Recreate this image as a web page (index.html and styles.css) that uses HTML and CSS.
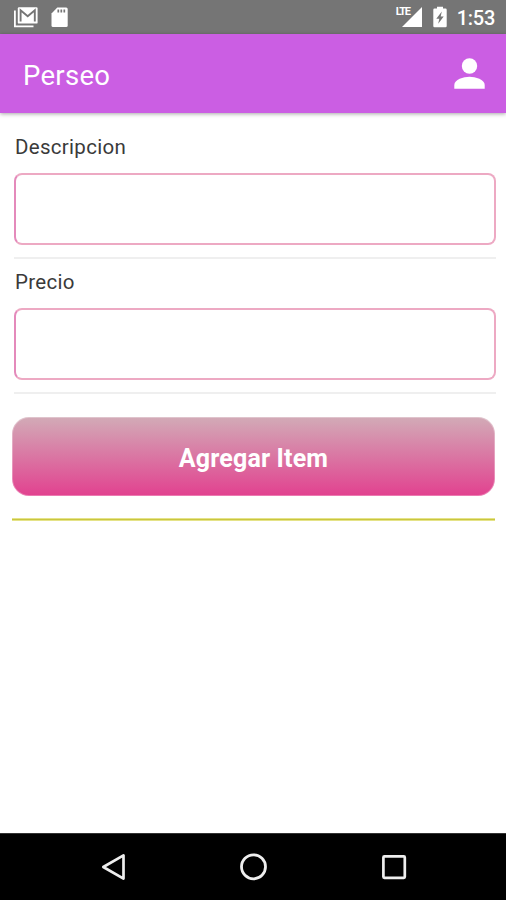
FILE: index.html
```html
<!DOCTYPE html>
<html lang="es">
<head>
    <meta charset="UTF-8">
    <meta name="viewport" content="width=device-width, initial-scale=1.0">
    <title>Perseo</title>
    <link rel="stylesheet" href="styles.css">
</head>
<body>
    <div class="status-bar">
        <svg class="icon-mail" width="25" height="22" viewBox="0 0 25 22">
            <path d="M1.9 4.5V20.4H20.5" fill="none" stroke="#fff" stroke-width="1.8"/>
            <rect x="4.8" y="1.2" width="19.8" height="16.4" rx="1.2" fill="#fff"/>
            <path d="M7.6 15.6V4.2L14.7 10.2L21.8 4.2V15.6" fill="none" stroke="#757575" stroke-width="1.9"/>
        </svg>
        <svg class="icon-sd" width="18" height="22" viewBox="0 0 18 22">
            <path d="M6.3 1.5H15.2Q16.7 1.5 16.7 3V19.5Q16.7 21 15.2 21H2Q.5 21 .5 19.5V7.5Z" fill="#fff"/>
            <path d="M7.3 3.5V6.5M10.3 3.5V6.5M13.3 3.5V6.5" stroke="#757575" stroke-width="1.7"/>
        </svg>
        <div class="signal">
            <span class="lte">LTE</span>
            <svg width="20" height="20" viewBox="0 0 20 20">
                <path d="M20 0V20H0Z" fill="#fff"/>
            </svg>
        </div>
        <svg class="icon-battery" width="14" height="22" viewBox="0 0 14 22">
            <path d="M4 .8H10V2.5H12.5Q13.7 2.5 13.7 3.7V20Q13.7 21.2 12.5 21.2H1.5Q.3 21.2 .3 20V3.7Q.3 2.5 1.5 2.5H4Z" fill="#fff"/>
            <path d="M8.8 5.5L3.3 12.7H6.3L5.2 17.8L10.7 10.5H7.7Z" fill="#757575"/>
        </svg>
        <span class="clock">1:53</span>
    </div>

    <header class="app-bar">
        <h1>Perseo</h1>
        <svg width="31" height="31" viewBox="0 0 31 31">
            <circle cx="15.5" cy="8" r="7.7" fill="#fff"/>
            <path d="M.3 30.7V27C.3 21.5 9.5 18.7 15.5 18.7S30.7 21.5 30.7 27V30.7Z" fill="#fff"/>
        </svg>
    </header>

    <main class="content">
        <form>
            <div class="field">
                <label for="descripcion">Descripcion</label>
                <input type="text" id="descripcion">
            </div>
            <div class="field">
                <label for="precio">Precio</label>
                <input type="text" id="precio">
            </div>
            <button type="button" class="add-button">Agregar Item</button>
        </form>
        <div class="list-line"></div>
    </main>

    <nav class="nav-bar">
        <svg width="28" height="30" viewBox="0 0 28 30">
            <path d="M23.5 3.4V26.6L3.3 15Z" fill="none" stroke="#eee" stroke-width="2.7" stroke-linejoin="round"/>
        </svg>
        <svg width="28" height="30" viewBox="0 0 28 30">
            <circle cx="13.5" cy="14.8" r="12" fill="none" stroke="#eee" stroke-width="2.8"/>
        </svg>
        <svg width="28" height="30" viewBox="0 0 28 30">
            <rect x="3.4" y="4.4" width="21.4" height="21.4" rx="1" fill="none" stroke="#eee" stroke-width="2.7"/>
        </svg>
    </nav>
</body>
</html>
```

FILE: styles.css
```css
* {
    box-sizing: border-box;
}

body {
    margin: 0;
    height: 900px;
    display: flex;
    flex-direction: column;
    background-color: #fff;
    font-family: Roboto, "Liberation Sans", sans-serif;
    overflow: hidden;
}

svg {
    display: block;
    flex: none;
}

/* Android status bar */
.status-bar {
    flex: none;
    display: flex;
    align-items: center;
    height: 34px;
    padding: 0 11px 0 13px;
    background-color: #757575;
    color: #fff;
}

.icon-sd {
    margin-left: 13px;
}

.signal {
    display: flex;
    margin-left: auto;
}

.lte {
    width: 6px;
    margin-top: -1px;
    font-size: 11px;
    font-weight: 700;
    line-height: 11px;
    letter-spacing: -1.2px;
    white-space: nowrap;
}

.icon-battery {
    margin-left: 11px;
}

.clock {
    margin-left: 10px;
    padding-top: 2px;
    font-size: 20px;
    font-weight: 500;
    line-height: 24px;
    letter-spacing: -0.25px;
}

.app-bar {
    flex: none;
    display: flex;
    align-items: center;
    justify-content: space-between;
    height: 79px;
    padding: 0 21px 0 23px;
    background-color: #cb5ee3;
    box-shadow: 0 1px 4px rgba(0, 0, 0, 0.35);
    color: #fff;
}

h1 {
    margin: 4px 0 0;
    font-size: 27.5px;
    font-weight: 400;
    line-height: 32px;
    letter-spacing: 0.3px;
}

.content {
    flex: 1;
    padding: 21px 11px 0 12px;
}

.field {
    height: 135px;
    margin: 0 -1px 0 2px;
    padding-top: 1px;
}

label {
    display: block;
    height: 38px;
    padding-left: 1px;
    color: #3a3a3a;
    font-size: 20.5px;
    line-height: 25px;
    letter-spacing: 0.3px;
}

input {
    display: block;
    width: 100%;
    height: 72px;
    padding: 0 12px;
    border: 2px solid #eda9c3;
    border-left-color: #e48abb;
    border-radius: 8px;
    background-color: #fff;
    font: inherit;
    font-size: 20px;
}

/* thin separator below each field */
.field::after {
    content: "";
    display: block;
    height: 2px;
    margin-top: 12px;
    background-color: #efefef;
}

.add-button {
    display: block;
    width: 100%;
    height: 79px;
    margin-top: 13px;
    padding: 4px 0 0;
    border: 1px solid rgba(255, 255, 255, 0.3);
    border-radius: 17px;
    background: linear-gradient(#d2abb7, #e2418f) border-box;
    color: #fff;
    font: 700 25px Roboto, "Liberation Sans", sans-serif;
    letter-spacing: 0.15px;
}

.list-line {
    height: 3px;
    margin-top: 22px;
    border: 1px solid #e5e388;
    border-width: 1px 0;
    background-color: #c9c640;
}

.nav-bar {
    flex: none;
    display: flex;
    justify-content: center;
    gap: 112px;
    height: 67px;
    padding: 19px 0 0 1px;
    border-top: 1px solid #333;
    padding-top: 18px;
    background-color: #000;
}
```
